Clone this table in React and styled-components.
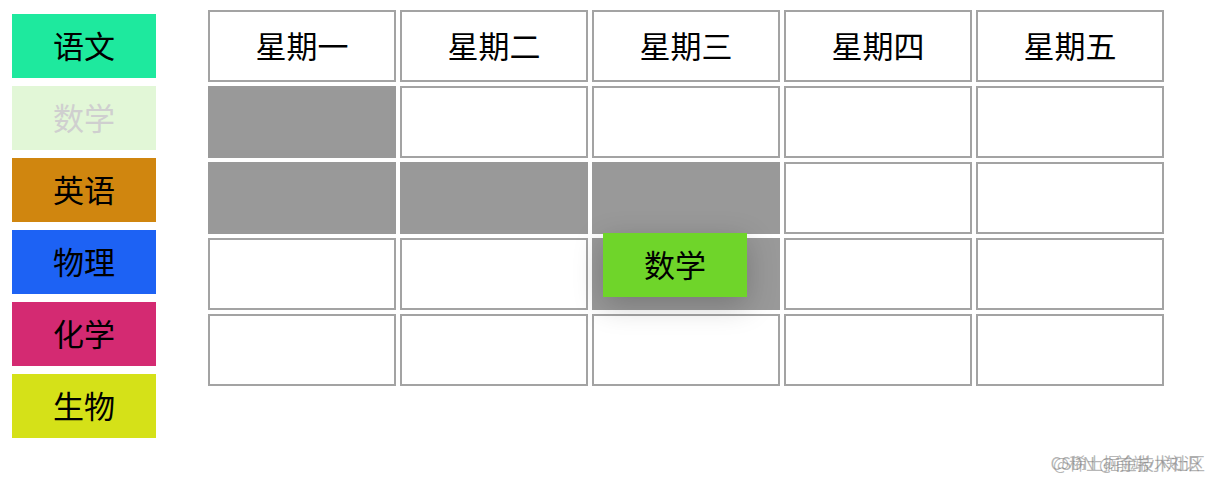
import React from 'react';
import styled, { createGlobalStyle } from 'styled-components';

const subjects = [
  { name: '语文', bg: '#1ee99e' },
  { name: '数学', bg: '#e2f7d7', dim: true },
  { name: '英语', bg: '#d0860f' },
  { name: '物理', bg: '#1d62f4' },
  { name: '化学', bg: '#d42a72' },
  { name: '生物', bg: '#d5e118' },
];

const days = ['星期一', '星期二', '星期三', '星期四', '星期五'];

// filled cells: [row, col]
const filled = ['0-0', '1-0', '1-1', '1-2', '2-2'];

const GlobalStyle = createGlobalStyle`
  body {
    margin: 0;
    background: #fff;
    font-family: "Noto Sans CJK SC", "Noto Sans", sans-serif;
  }
`;

const Page = styled.div`
  position: relative;
  width: 1214px;
  height: 480px;
  display: flex;
  align-items: flex-start;
  padding: 10px 0 0 12px;
  box-sizing: border-box;
`;

const Sidebar = styled.div`
  display: flex;
  flex-direction: column;
  gap: 8px;
  margin-top: 4px;
  width: 144px;
`;

const Subject = styled.div`
  height: 64px;
  box-sizing: border-box;
  padding-bottom: 3px;
  display: flex;
  align-items: center;
  justify-content: center;
  font-size: 31px;
  background: ${(p) => p.bg};
  color: ${(p) => (p.dim ? '#cfcfcf' : '#000')};
`;

const Table = styled.div`
  margin-left: 52px;
  display: grid;
  grid-template-columns: repeat(5, 188px);
  grid-auto-rows: 72px;
  gap: 4px;
`;

const Cell = styled.div`
  box-sizing: border-box;
  border: 2px solid ${(p) => (p.filled ? '#999' : '#a3a3a3')};
  background: ${(p) => (p.filled ? '#999' : '#fff')};
  padding-bottom: 3px;
  display: flex;
  align-items: center;
  justify-content: center;
  font-size: 31px;
  color: #000;
`;

const Dragging = styled.div`
  position: absolute;
  left: 603px;
  top: 233px;
  width: 144px;
  height: 64px;
  box-sizing: border-box;
  padding-bottom: 3px;
  background: #6fd52a;
  display: flex;
  align-items: center;
  justify-content: center;
  font-size: 31px;
  color: #000;
  box-shadow: 0 8px 30px rgba(0, 0, 0, 0.22);
`;

const Watermark = styled.div`
  position: absolute;
  right: ${(p) => p.right}px;
  top: 450px;
  font-size: 17px;
  color: rgba(120, 120, 120, 0.55);
  white-space: nowrap;
`;

export default function App() {
  return (
    <>
      <GlobalStyle />
      <Page>
        <Sidebar>
          {subjects.map((s) => (
            <Subject key={s.name} bg={s.bg} dim={s.dim}>
              {s.name}
            </Subject>
          ))}
        </Sidebar>
        <Table>
          {days.map((d) => (
            <Cell key={d}>{d}</Cell>
          ))}
          {[0, 1, 2, 3].map((r) =>
            days.map((_, c) => (
              <Cell key={`${r}-${c}`} filled={filled.includes(`${r}-${c}`)} />
            ))
          )}
        </Table>
        <Dragging>数学</Dragging>
        <Watermark right={14}>CSDN @前端小知识</Watermark>
        <Watermark right={9}>@稀土掘金技术社区</Watermark>
      </Page>
    </>
  );
}
